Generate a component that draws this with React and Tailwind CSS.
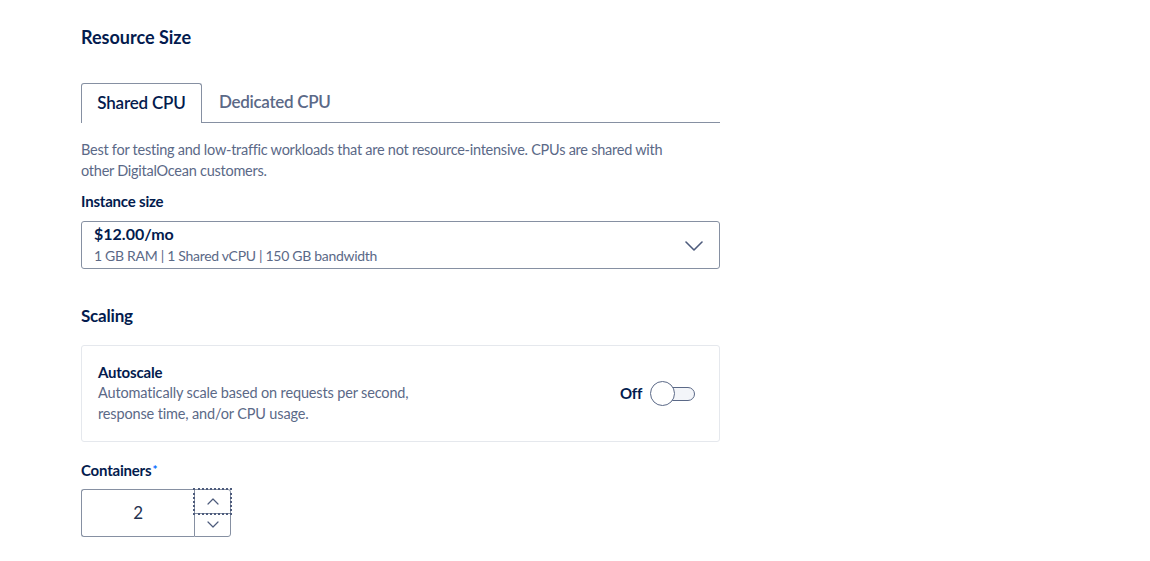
import React from "react";

export default function App() {
  return (
    <div className="min-h-[561px] w-full bg-white font-['Lato',sans-serif] text-[#031b4e]">
      <div className="pl-[81px] pt-[26px] w-[720px]">
        <h2 className="text-[18px] leading-[22px] font-bold">Resource Size</h2>

        <div className="mt-[35px] flex items-end border-b border-[#8690a2] h-[40px]">
          <div className="h-[40px] w-[121px] -mb-px flex items-center justify-center border border-b-0 border-[#8690a2] rounded-t-[3px] bg-white text-[17px] font-semibold tracking-[-0.2px] text-[#031b4e] pb-[2px]">
            Shared CPU
          </div>
          <div className="h-[40px] flex items-center pl-[17px] text-[17px] font-semibold tracking-[-0.3px] text-[#5b6987]">
            Dedicated CPU
          </div>
        </div>

        <p className="mt-[16px] max-w-[592px] text-[14.5px] leading-[21px] tracking-[-0.25px] text-[#5b6987]">
          Best for testing and low-traffic workloads that are not resource-intensive. CPUs are shared with other DigitalOcean customers.
        </p>

        <div className="mt-[10px] text-[15px] leading-[20px] font-bold tracking-[-0.2px]">Instance size</div>

        <div className="mt-[10px] h-[48px] border border-[#8690a2] rounded-[3px] flex items-center justify-between pl-[12px] pr-[16px]">
          <div className="flex flex-col">
            <span className="text-[16px] leading-[20px] font-bold -mt-[2px]">$12.00/mo</span>
            <span className="mt-[3px] text-[14px] leading-[18px] tracking-[-0.3px] text-[#5b6987]">1 GB RAM | 1 Shared vCPU | 150 GB bandwidth</span>
          </div>
          <svg width="18" height="10" viewBox="0 0 18 10" fill="none" className="mt-[2px]">
            <path d="M1 1l8 8 8-8" stroke="#4d5b7c" strokeWidth="1.6" strokeLinecap="round" strokeLinejoin="round" />
          </svg>
        </div>

        <h3 className="mt-[36px] text-[17px] leading-[22px] font-bold tracking-[-0.2px]">Scaling</h3>

        <div className="mt-[18px] h-[97px] border border-[#e5e8ed] rounded-[3px] flex items-center justify-between pl-[16px] pr-[24px]">
          <div className="flex flex-col -mt-[2px]">
            <span className="text-[15px] leading-[20px] font-bold tracking-[-0.2px]">Autoscale</span>
            <span className="text-[14.5px] leading-[21px] tracking-[-0.15px] text-[#5b6987] w-[330px]">
              Automatically scale based on requests per second, response time, and/or CPU usage.
            </span>
          </div>
          <div className="flex items-center gap-[8px]">
            <span className="text-[15px] font-bold tracking-[-0.3px]">Off</span>
            <div className="relative w-[45px] h-[25px] flex items-center">
              <div className="absolute left-[11px] right-0 h-[14px] rounded-full border-[1.5px] border-[#5b6987] bg-[#f3f5f9]" />
              <div className="absolute left-0 w-[25px] h-[25px] rounded-full border-[1.5px] border-[#5b6987] bg-white" />
            </div>
          </div>
        </div>

        <div className="mt-[18px] text-[15px] leading-[20px] font-bold tracking-[-0.2px]">
          Containers<span className="text-[#0069ff] text-[12px] align-top ml-[1px]">*</span>
        </div>

        <div className="mt-[9px] flex h-[48px] w-[150px]">
          <div className="w-[114px] h-full border border-[#8690a2] border-r-0 rounded-l-[3px] flex items-center justify-center text-[17px] text-[#24324f]">
            2
          </div>
          <div className="w-[37px] h-full border border-[#8690a2] rounded-r-[3px] flex flex-col">
            <div className="relative flex-1 flex items-center justify-center border-b border-[#8690a2]">
              <div className="absolute -left-[2px] -top-[2px] -right-[2px] -bottom-[2px] border-2 border-dotted border-[#4d5b7c]" />
              <svg width="12" height="7" viewBox="0 0 12 7" fill="none">
                <path d="M1 6l5-5 5 5" stroke="#4d5b7c" strokeWidth="1.2" strokeLinecap="round" strokeLinejoin="round" />
              </svg>
            </div>
            <div className="flex-1 flex items-center justify-center">
              <svg width="12" height="7" viewBox="0 0 12 7" fill="none">
                <path d="M1 1l5 5 5-5" stroke="#4d5b7c" strokeWidth="1.2" strokeLinecap="round" strokeLinejoin="round" />
              </svg>
            </div>
          </div>
        </div>
      </div>
    </div>
  );
}
